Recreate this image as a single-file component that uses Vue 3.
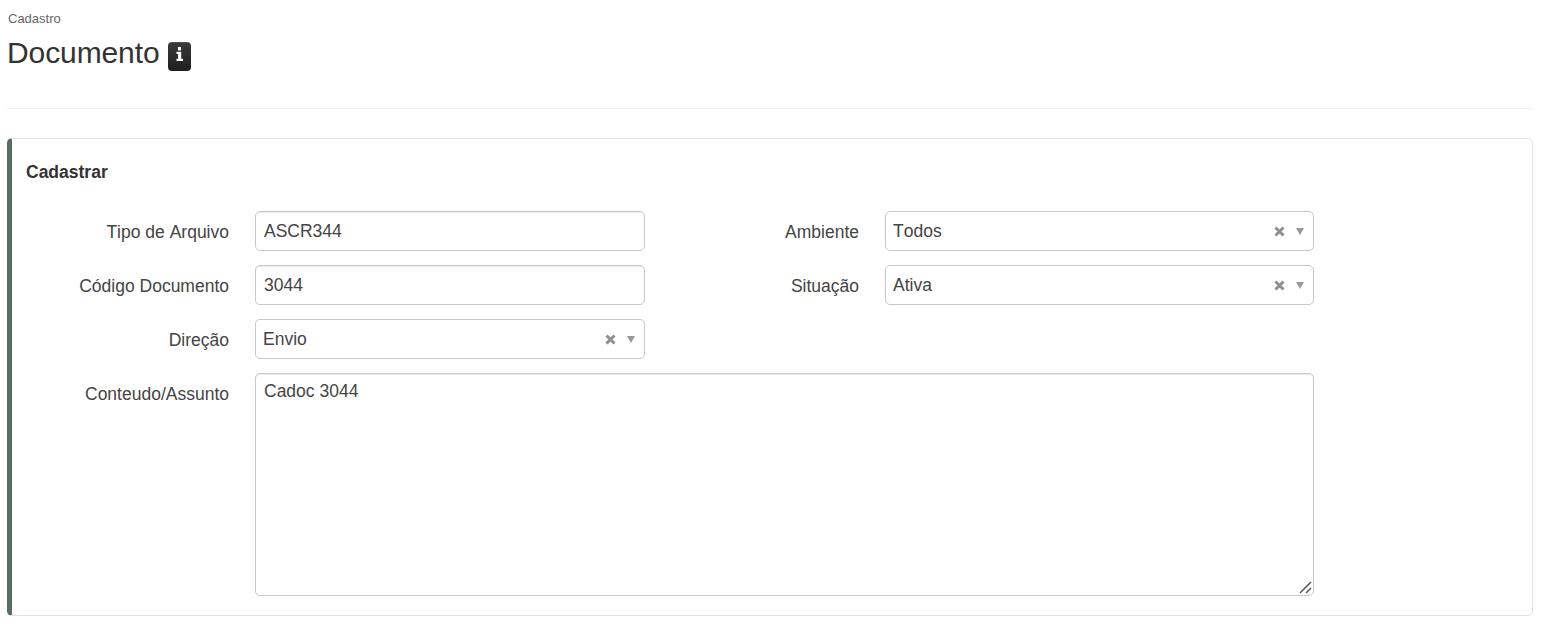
<script setup>
const topFields = [
  { label: 'Tipo de Arquivo', value: 'ASCR344', kind: 'input' },
  { label: 'Ambiente', value: 'Todos', kind: 'select' },
  { label: 'Código Documento', value: '3044', kind: 'input' },
  { label: 'Situação', value: 'Ativa', kind: 'select' },
  { label: 'Direção', value: 'Envio', kind: 'select' }
]
</script>

<template>
  <div class="page">
    <div class="crumb">Cadastro</div>
    <h1 class="title">
      <span>Documento</span>
      <span class="info" aria-label="Informações">
        <svg width="7" height="14" viewBox="0 0 7 14">
          <rect x="2" y="0" width="3" height="3.4" fill="#fff" />
          <path d="M0.5 4.8h4.7v6.9H7V14H0.5v-2.3h1.6V7.1H0.5z" fill="#fff" />
        </svg>
      </span>
    </h1>
    <hr class="rule" />
    <section class="panel">
      <h2 class="panel-title">Cadastrar</h2>
      <form class="form" @submit.prevent>
        <template v-for="f in topFields" :key="f.label">
          <label class="label">{{ f.label }}</label>
          <input v-if="f.kind === 'input'" class="control" type="text" :value="f.value" />
          <div v-else class="control select">
            <span class="select-value">{{ f.value }}</span>
            <svg class="clear" width="11" height="11" viewBox="0 0 11 11">
              <path d="M1.5 1.5l8 8M9.5 1.5l-8 8" stroke="#8f8f8f" stroke-width="3" fill="none" />
            </svg>
            <span class="caret"></span>
          </div>
        </template>
        <span class="filler"></span>
        <label class="label">Conteudo/Assunto</label>
        <div class="area-wrap">
          <textarea class="control area">Cadoc 3044</textarea>
          <svg class="grip" width="13" height="13" viewBox="0 0 13 13">
            <path d="M1 12L12 1M7 12l5-5" stroke="#555" stroke-width="1.5" fill="none" />
          </svg>
        </div>
      </form>
    </section>
  </div>
</template>

<style scoped>
.page {
  padding: 12px 21px 0 7px;
  font-family: "Liberation Sans", Arial, sans-serif;
  font-kerning: none;
  color: #333;
}
.crumb {
  font-size: 13px;
  line-height: 13px;
  color: #666;
  padding-left: 1px;
}
.title {
  display: flex;
  align-items: center;
  gap: 8px;
  margin: 10px 0 0;
  font-size: 30px;
  font-weight: 400;
  line-height: 36px;
  height: 36px;
  letter-spacing: -0.1px;
}
.info {
  width: 23px;
  height: 29px;
  margin-top: 6px;
  border-radius: 4px;
  background: linear-gradient(#3a3a3a, #1f1f1f);
  display: flex;
  align-items: center;
  justify-content: center;
  padding-bottom: 5px;
  box-sizing: border-box;
  box-shadow: inset 0 1px 0 rgba(255, 255, 255, 0.12);
}
.rule {
  border: 0;
  border-top: 1px solid #eee;
  margin: 37px 0 29px;
}
.panel {
  height: 478px;
  box-sizing: border-box;
  border: 1px solid #e3e3e3;
  border-left: 5px solid #5a6b62;
  border-radius: 5px;
  background: #fff;
  padding: 14px 14px 0 14px;
}
.panel-title {
  margin: 7px 0 0;
  font-size: 17.5px;
  line-height: 24px;
  font-weight: 700;
  color: #333;
}
.form {
  margin-top: 27px;
  display: grid;
  grid-template-columns: 203px 390px 188px 429px;
  grid-auto-rows: 40px;
  column-gap: 26px;
  row-gap: 14px;
}
.label {
  font-size: 17.5px;
  line-height: 20px;
  padding-top: 11px;
  text-align: right;
  color: #444;
}
.control {
  box-sizing: border-box;
  width: 100%;
  height: 40px;
  margin: 0;
  border: 1px solid #c8c8c8;
  border-radius: 5px;
  padding: 0 8px;
  font: 17.5px/20px "Liberation Sans", Arial, sans-serif;
  font-kerning: none;
  color: #444;
  background: #fff;
  outline: none;
  box-shadow: inset 0 1px 1px rgba(0, 0, 0, 0.075);
}
.select {
  display: flex;
  align-items: center;
  padding: 0 7px;
  box-shadow: none;
}
.select-value {
  flex: 1;
  margin-top: -1px;
}
.clear {
  margin-right: 11px;
}
.caret {
  width: 0;
  height: 0;
  border-left: 4.5px solid transparent;
  border-right: 4.5px solid transparent;
  border-top: 7px solid #999;
  margin-right: 2px;
  margin-top: 1px;
}
.filler {
  grid-column: span 2;
}
.area-wrap {
  grid-column: 2 / 5;
  position: relative;
  height: 223px;
}
.area {
  height: 223px;
  padding: 7px 8px;
  display: block;
  resize: none;
}
.grip {
  position: absolute;
  right: 2px;
  bottom: 2px;
}
</style>
